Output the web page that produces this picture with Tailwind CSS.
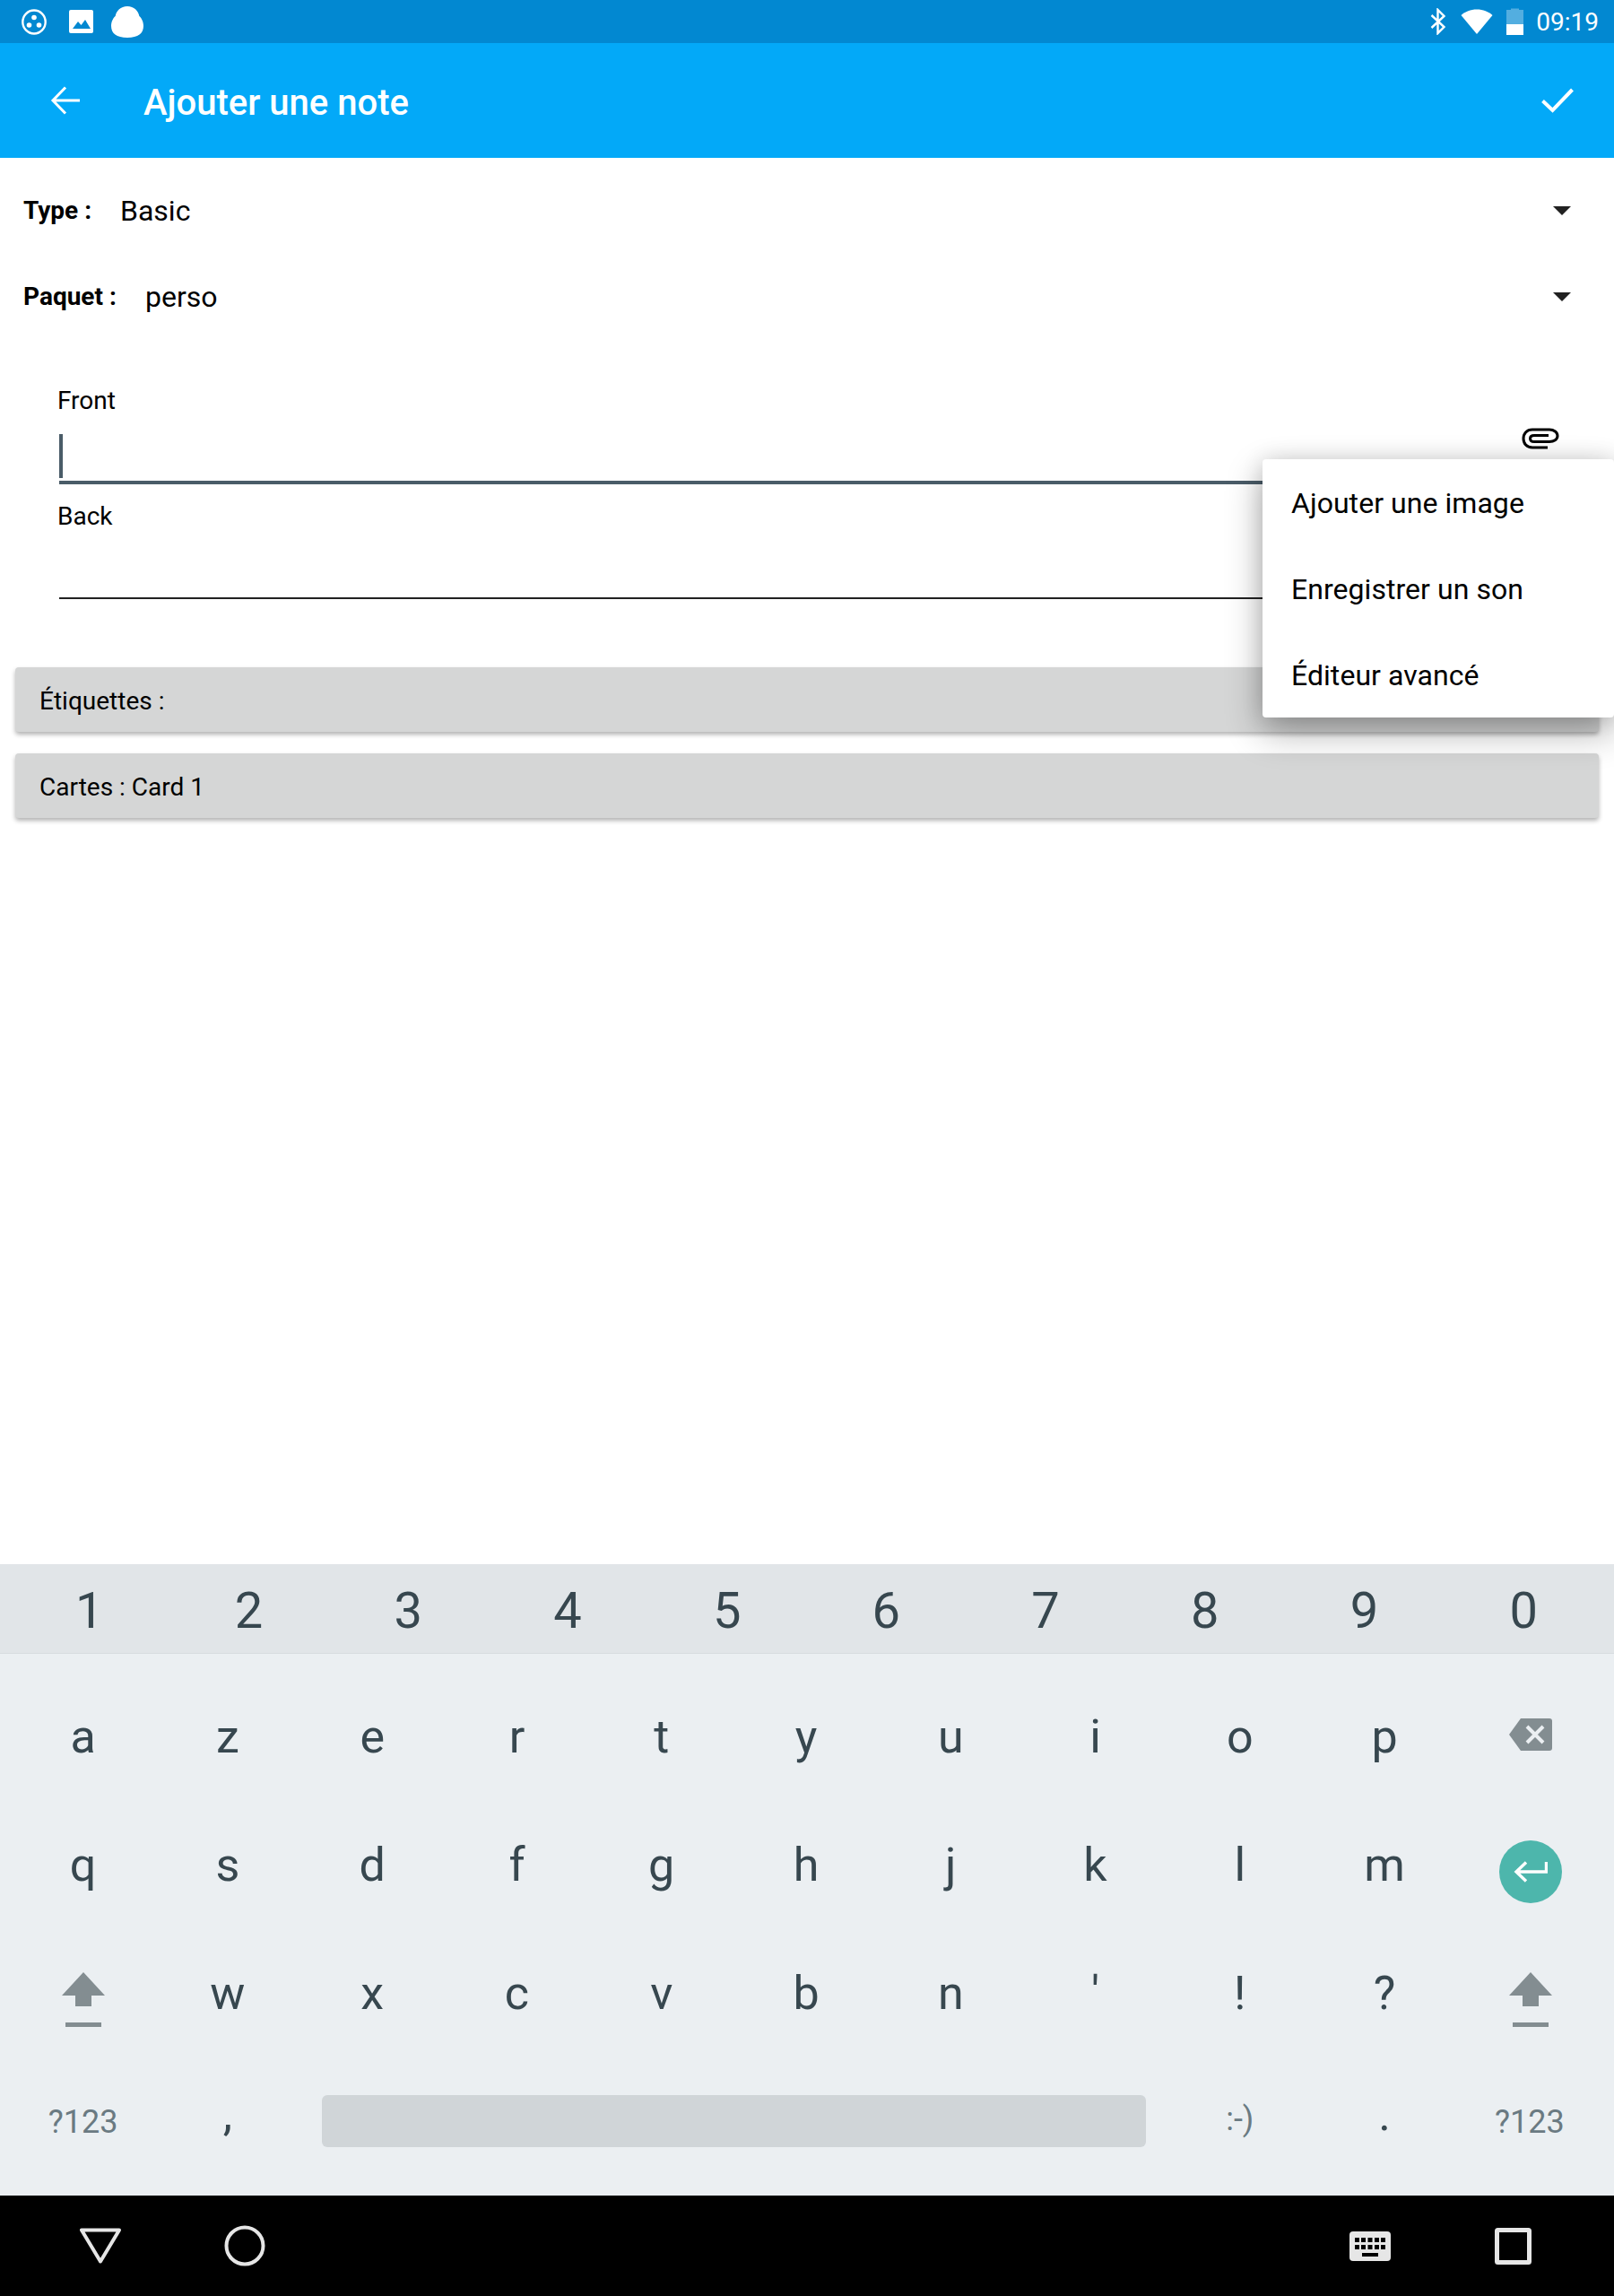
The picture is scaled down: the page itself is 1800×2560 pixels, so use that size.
<!DOCTYPE html>
<html><head><meta charset="utf-8"><script src="https://cdn.jsdelivr.net/npm/@tailwindcss/browser@4"></script></head>
<body class="font-['Roboto',sans-serif] bg-white">
<div class="w-[1800px] h-[2560px] flex flex-col overflow-hidden">
  <!-- status bar -->
  <div class="h-12 bg-[#0288d1] flex items-center pl-[24px] pr-[17px] text-white">
    <svg width="28" height="29" viewBox="0 0 28 29" class="mr-[25px]"><ellipse cx="14" cy="14.500" rx="12.700" ry="13" fill="none" stroke="#fff" stroke-width="2.400"/><circle cx="14" cy="9.500" r="2.800" fill="#fff"/><circle cx="8.500" cy="18" r="2.800" fill="#fff"/><circle cx="19.500" cy="18" r="2.800" fill="#fff"/></svg>
    <svg width="27" height="26" viewBox="0 0 27 26" class="mr-[20px]"><rect width="27" height="26" rx="2" fill="#fff"/><path d="M4 21 L10 13 L13.500 17 L18 11 L24 21 Z" fill="#0288d1"/></svg>
    <svg width="36" height="35" viewBox="0 0 31 35" preserveAspectRatio="none"><path d="M15.500 0 C22 0 26 5 27 11 C29 13 31 17 31 22 C31 30 26 35 15.500 35 C5 35 0 30 0 22 C0 17 2 13 4 11 C5 5 9 0 15.500 0 Z" fill="#fff"/></svg>
    <div class="flex-1"></div>
    <svg width="18" height="30" viewBox="0 0 18 30" class="mr-[16px]"><path d="M1.500 8 L15.500 21 L8.500 28 V2 L15.500 9 L1.500 22" fill="none" stroke="#fff" stroke-width="2.400"/></svg>
    <svg width="36" height="28" viewBox="0 0 36 28" class="mr-[15px]"><path d="M18 28 L0.500 7 C5 3 11 0.500 18 0.500 C25 0.500 31 3 35.500 7 Z" fill="#fff"/></svg>
    <svg width="19" height="30" viewBox="0 0 19 30" class="mr-[14px]"><path d="M5 2 V0.500 H14 V2 H19 V30 H0 V2 Z" fill="#fff" fill-opacity="0.32"/><rect y="18" width="19" height="12" fill="#fff"/></svg>
    <span class="text-[28px] leading-none mt-[2px]">09:19</span>
  </div>
  <!-- app bar -->
  <div class="h-32 bg-[#03a9f8] flex items-center text-white">
    <svg width="33" height="32" viewBox="0 0 33 32" class="ml-[56px] mr-[71px]"><path d="M33 16 H3 M17 1.500 L3 16 L17 30.500" fill="none" stroke="#fff" stroke-width="3"/></svg>
    <span class="text-[40px] font-medium leading-none mt-[5px]">Ajouter une note</span>
    <div class="flex-1"></div>
    <svg width="36" height="28" viewBox="0 0 36 28" class="mr-[45px]"><path d="M1.500 14.500 L12.500 25 L34.500 2" fill="none" stroke="#fff" stroke-width="4"/></svg>
  </div>
  <!-- main -->
  <div class="flex-1 relative">
    <div class="pt-[11px]">
      <div class="flex items-center h-[96px] pl-[26px] pr-[48px] text-black">
        <span class="font-bold text-[28px] w-[108px]">Type :</span>
        <span class="text-[32px] flex-1">Basic</span>
        <svg width="20" height="10" viewBox="0 0 20 10"><path d="M0 0 H20 L10 10 Z" fill="#212121"/></svg>
      </div>
      <div class="flex items-center h-[96px] pl-[26px] pr-[48px] text-black">
        <span class="font-bold text-[28px] w-[136px]">Paquet :</span>
        <span class="text-[32px] flex-1">perso</span>
        <svg width="20" height="10" viewBox="0 0 20 10"><path d="M0 0 H20 L10 10 Z" fill="#212121"/></svg>
      </div>
    </div>
    <div class="pl-[64px] pr-[62px] pt-[48px]">
      <div class="text-[28px] leading-[40px] text-black">Front</div>
      <div class="relative h-[73px] ml-[2px] border-b-4 border-[#4a5c68]">
        <div class="absolute left-0 top-[17px] w-1 h-[49px] bg-[#4a5c68]"></div>
      </div>
      <div class="text-[28px] leading-[40px] text-black mt-[16px] -mb-[1px]">Back</div>
      <div class="h-[73px] ml-[2px] border-b-2 border-[#212121]"></div>
    </div>
    <div class="mt-[76px] mx-[17px] flex flex-col gap-6">
      <div class="h-[72px] w-[1766px] bg-[#d5d6d6] rounded-[4px] shadow-[0_3px_5px_rgba(0,0,0,0.3)] pl-[27px] pt-[3px] flex items-center text-[28px] text-black">Étiquettes :</div>
      <div class="h-[72px] w-[1766px] bg-[#d5d6d6] rounded-[4px] shadow-[0_3px_5px_rgba(0,0,0,0.3)] pl-[27px] pt-[3px] flex items-center text-[28px] text-black">Cartes : Card 1</div>
    </div>
    <!-- clip -->
    <svg width="42" height="24" viewBox="0 0 42 24" class="absolute left-[1697px] top-[301px]"><path d="M29 22 H12 C5.500 22 2 17.500 2 12 C2 6.500 5.500 2 12 2 H31 C36 2 40 5 40 9 C40 13 36 15.500 31 15.500 H14 C11 15.500 9.500 14 9.500 12 C9.500 10 11 8.500 14 8.500 H30" fill="none" stroke="#000" stroke-width="3"/></svg>
    <!-- popup -->
    <div class="absolute left-[1408px] top-[336px] w-[392px] h-[288px] bg-white rounded-[4px] shadow-[0_16px_40px_rgba(0,0,0,0.32),0_0_24px_rgba(0,0,0,0.12)] pl-[32px] flex flex-col text-[32px] tracking-[0.05px] text-black">
      <div class="h-24 flex items-center pt-[2px]">Ajouter une image</div>
      <div class="h-24 flex items-center pt-[2px]">Enregistrer un son</div>
      <div class="h-24 flex items-center pt-[2px]">Éditeur avancé</div>
    </div>
  </div>
  <!-- keyboard -->
  <div class="h-[704px] bg-[#ebeff2] flex flex-col text-[#37474f]">
    <div class="h-[100px] bg-[#e1e5e8] border-b border-[#d8dde0] grid grid-cols-10 pl-[11px] pr-[12px] text-[56px] items-center text-center leading-none">
      <span class="mt-[5px]">1</span><span class="mt-[5px]">2</span><span class="mt-[5px]">3</span><span class="mt-[5px]">4</span><span class="mt-[5px]">5</span><span class="mt-[5px]">6</span><span class="mt-[5px]">7</span><span class="mt-[5px]">8</span><span class="mt-[5px]">9</span><span class="mt-[5px]">0</span>
    </div>
    <div class="flex-1 grid grid-cols-11 grid-rows-4 pl-[12px] pr-[14px] pt-[22px] pb-[11px] text-[52px] items-center justify-items-center leading-none">
      <span>a</span><span>z</span><span>e</span><span>r</span><span>t</span><span>y</span><span>u</span><span>i</span><span>o</span><span>p</span>
      <svg width="48" height="36" viewBox="0 0 48 36" class="-mt-[6px] ml-[3px]"><path d="M13 0 H45 Q48 0 48 3 V33 Q48 36 45 36 H13 L0 18 Z" fill="#838d91"/><path d="M20 9 L38 27 M38 9 L20 27" stroke="#ebeff2" stroke-width="4"/></svg>
      <span>q</span><span>s</span><span>d</span><span>f</span><span>g</span><span>h</span><span>j</span><span>k</span><span>l</span><span>m</span>
      <div class="w-[70px] h-[70px] rounded-full bg-[#4db6ac] flex items-center justify-center mt-[14px] ml-[3px]"><svg width="38" height="24" viewBox="0 0 38 24"><path d="M36.500 1 V12 H3 M14 1.500 L3 12 L14 22.500" fill="none" stroke="#fff" stroke-width="3.400"/></svg></div>
      <svg width="48" height="61" viewBox="0 0 48 61" class="mt-[14px]"><path d="M24 0 L48 26 H33 V38 H15 V26 H0 Z M4 56 H44 V61 H4 Z" fill="#838d91"/></svg>
      <span>w</span><span>x</span><span>c</span><span>v</span><span>b</span><span>n</span><span>'</span><span>!</span><span>?</span>
      <svg width="48" height="61" viewBox="0 0 48 61" class="mt-[14px] ml-[3px]"><path d="M24 0 L48 26 H33 V38 H15 V26 H0 Z M4 56 H44 V61 H4 Z" fill="#838d91"/></svg>
      <span class="text-[36px] text-[#6a7a82]">?123</span><span class="-mt-[16px]">,</span>
      <div class="col-span-6 justify-self-stretch mx-6 -mt-[2px] h-[58px] rounded-[6px] bg-[#d0d5d8]"></div>
      <span class="text-[36px] text-[#6a7a82] -mt-[6px]">:-)</span><span class="-mt-[16px]">.</span><span class="text-[36px] text-[#6a7a82] ml-[1px]">?123</span>
    </div>
  </div>
  <!-- nav -->
  <div class="h-[112px] bg-black flex items-center">
    <svg width="46" height="40" viewBox="0 0 46 40" class="ml-[89px] mr-[115px]"><path d="M2 2.500 H44 L23 37.500 Z" fill="none" stroke="#e6e6e6" stroke-width="4" stroke-linejoin="round"/></svg>
    <svg width="46" height="46" viewBox="0 0 46 46"><circle cx="23" cy="23" r="20.500" fill="none" stroke="#e6e6e6" stroke-width="4"/></svg>
    <div class="flex-1"></div>
    <svg width="46" height="33" viewBox="0 0 46 33" class="mr-[116px]"><rect width="46" height="33" rx="4" fill="#e6e6e6"/><g fill="#000"><rect x="6" y="7" width="5" height="5"/><rect x="13" y="7" width="5" height="5"/><rect x="20.500" y="7" width="5" height="5"/><rect x="28" y="7" width="5" height="5"/><rect x="35" y="7" width="5" height="5"/><rect x="6" y="15" width="5" height="5"/><rect x="13" y="15" width="5" height="5"/><rect x="20.500" y="15" width="5" height="5"/><rect x="28" y="15" width="5" height="5"/><rect x="35" y="15" width="5" height="5"/><rect x="14" y="24" width="18" height="4"/></g></svg>
    <svg width="41" height="41" viewBox="0 0 41 41" class="mr-[92px]"><rect x="2.500" y="2.500" width="36" height="36" rx="1" fill="none" stroke="#e6e6e6" stroke-width="5"/></svg>
  </div>
</div>
</body></html>
